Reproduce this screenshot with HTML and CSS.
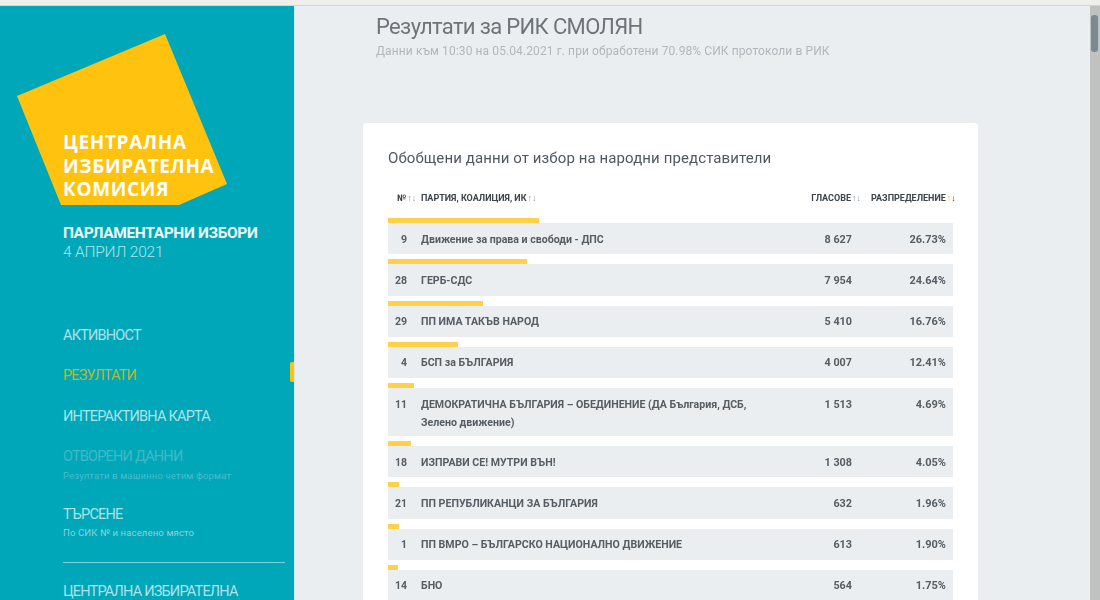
FILE: index.html
```html
<!DOCTYPE html>
<html lang="bg">
<head>
<meta charset="utf-8">
<title>Резултати за РИК СМОЛЯН</title>
<link rel="stylesheet" href="styles.css">
</head>
<body>
<div class="topstrip"></div>
<div class="app">
  <aside class="sidebar">
    <div class="logo">
      <svg class="logo-shape" width="294" height="210" viewBox="0 0 294 210"><polygon points="165,28 227,178 179,199 61,199 17,90" fill="#ffc20e"/></svg>
      <div class="logo-text">ЦЕНТРАЛНА<br>ИЗБИРАТЕЛНА<br>КОМИСИЯ</div>
    </div>
    <div class="election">
      <div class="election-name">ПАРЛАМЕНТАРНИ ИЗБОРИ</div>
      <div class="election-date">4 АПРИЛ 2021</div>
    </div>
    <nav class="nav">
      <a class="nav-item">АКТИВНОСТ</a>
      <a class="nav-item active">РЕЗУЛТАТИ<span class="marker"></span></a>
      <a class="nav-item">ИНТЕРАКТИВНА КАРТА</a>
      <a class="nav-item disabled">ОТВОРЕНИ ДАННИ<small>Резултати в машинно четим формат</small></a>
      <a class="nav-item">ТЪРСЕНЕ<small>По СИК № и населено място</small></a>
      <div class="nav-sep"></div>
      <a class="nav-item">ЦЕНТРАЛНА ИЗБИРАТЕЛНА</a>
    </nav>
  </aside>
  <main class="main">
    <h1 class="title">Резултати за РИК СМОЛЯН</h1>
    <p class="subtitle">Данни към 10:30 на 05.04.2021 г. при обработени 70.98% СИК протоколи в РИК</p>
    <section class="card">
      <h2 class="card-title">Обобщени данни от избор на народни представители</h2>
      <div class="thead">
        <div class="c-num">№<span class="arrows">↑↓</span></div>
        <div class="c-name">ПАРТИЯ, КОАЛИЦИЯ, ИК<span class="arrows">↑↓</span></div>
        <div class="h-votes">ГЛАСОВЕ<span class="arrows">↑↓</span></div>
        <div class="h-pct">РАЗПРЕДЕЛЕНИЕ<span class="arrows"><b>↑</b><i>↓</i></span></div>
      </div>
      <div class="result"><div class="bar" style="width:26.73%"></div><div class="row"><div class="c-num">9</div><div class="c-name">Движение за права и свободи - ДПС</div><div class="c-votes">8 627</div><div class="c-pct">26.73%</div></div></div>
      <div class="result"><div class="bar" style="width:24.64%"></div><div class="row"><div class="c-num">28</div><div class="c-name">ГЕРБ-СДС</div><div class="c-votes">7 954</div><div class="c-pct">24.64%</div></div></div>
      <div class="result"><div class="bar" style="width:16.76%"></div><div class="row"><div class="c-num">29</div><div class="c-name">ПП ИМА ТАКЪВ НАРОД</div><div class="c-votes">5 410</div><div class="c-pct">16.76%</div></div></div>
      <div class="result"><div class="bar" style="width:12.41%"></div><div class="row"><div class="c-num">4</div><div class="c-name">БСП за БЪЛГАРИЯ</div><div class="c-votes">4 007</div><div class="c-pct">12.41%</div></div></div>
      <div class="result"><div class="bar" style="width:4.69%"></div><div class="row"><div class="c-num">11</div><div class="c-name">ДЕМОКРАТИЧНА БЪЛГАРИЯ – ОБЕДИНЕНИЕ (ДА България, ДСБ, Зелено движение)</div><div class="c-votes">1 513</div><div class="c-pct">4.69%</div></div></div>
      <div class="result"><div class="bar" style="width:4.05%"></div><div class="row"><div class="c-num">18</div><div class="c-name">ИЗПРАВИ СЕ! МУТРИ ВЪН!</div><div class="c-votes">1 308</div><div class="c-pct">4.05%</div></div></div>
      <div class="result"><div class="bar" style="width:1.96%"></div><div class="row"><div class="c-num">21</div><div class="c-name">ПП РЕПУБЛИКАНЦИ ЗА БЪЛГАРИЯ</div><div class="c-votes">632</div><div class="c-pct">1.96%</div></div></div>
      <div class="result"><div class="bar" style="width:1.90%"></div><div class="row"><div class="c-num">1</div><div class="c-name">ПП ВМРО – БЪЛГАРСКО НАЦИОНАЛНО ДВИЖЕНИЕ</div><div class="c-votes">613</div><div class="c-pct">1.90%</div></div></div>
      <div class="result"><div class="bar" style="width:1.75%"></div><div class="row"><div class="c-num">14</div><div class="c-name">БНО</div><div class="c-votes">564</div><div class="c-pct">1.75%</div></div></div>
    </section>
  </main>
  <div class="scrollbar"><div class="thumb"></div></div>
</div>
</body>
</html>
```
FILE: styles.css
```css
* { box-sizing: border-box; }
html, body { margin: 0; height: 600px; overflow: hidden; }
body { font-family: Roboto, "Liberation Sans", sans-serif; background: #ebeef1; display: flex; flex-direction: column; }
.topstrip { height: 6px; flex: none; background: #eeeeeb; border-bottom: 1px solid #d2d6d9; }
.app { flex: 1; display: flex; min-height: 0; overflow: hidden; filter: blur(0.75px); }

.sidebar { width: 295px; flex: none; background: #00a7b9; border-right: 1px solid #d5e6ea; color: #fff; position: relative; }
.logo { position: relative; height: 200px; padding: 125px 0 0 63px; }
.logo-shape { position: absolute; left: 0; top: 0; }
.logo-text { position: relative; font-family: "Open Sans", Roboto, sans-serif; font-weight: 700; font-size: 19px; line-height: 23.5px; letter-spacing: 0.65px; color: #fff; }
.election { margin: 18px 0 0 63px; }
.election-name { font-size: 15.5px; line-height: 19px; font-weight: 700; letter-spacing: -0.35px; color: #eef9fa; white-space: nowrap; }
.election-date { font-size: 15.5px; line-height: 19px; font-weight: 300; letter-spacing: -0.2px; color: #b5e3e9; }
.nav { margin-top: 65px; display: flex; flex-direction: column; padding-left: 63px; }
.nav-item { display: block; font-size: 14.5px; line-height: 18px; font-weight: 400; letter-spacing: -0.8px; color: #aee1e8; margin-bottom: 22.4px; white-space: nowrap; }
.nav-item small { display: block; font-size: 9.5px; line-height: 12px; margin-top: 4px; letter-spacing: 0.15px; color: #8ad3dc; }
.nav-item.active { color: #b3b83a; }
.nav-item.disabled { color: #40b9c7; margin-bottom: 24px; }
.nav-item.disabled small { color: #49bcca; }
.nav-item:nth-child(5) { margin-bottom: 0; }
.nav-item:nth-child(5) small { margin-top: 3px; }
.marker { position: absolute; right: 0; width: 4px; height: 20px; margin-top: -5px; background: #ffc20e; border-radius: 2px 0 0 2px; }
.nav-sep { height: 1px; background: #7fd2dc; margin: 23px 9px 20px 0; flex: none; }

.main { flex: 1; min-width: 0; padding-left: 68px; color: #555e66; }
.title { margin: 8px 0 0 13px; font-size: 22px; line-height: 26px; font-weight: 400; letter-spacing: -0.65px; color: #6d747a; }
.subtitle { margin: 3px 0 0 13px; font-size: 12px; line-height: 16px; color: #b0b7bc; letter-spacing: 0.1px; }
.card { width: 615px; height: 560px; margin-top: 64px; padding: 25px 25px 0; background: #fff; border-radius: 4px; }
.card-title { margin: 0; font-size: 15px; line-height: 20px; font-weight: 400; color: #50585f; letter-spacing: 0.1px; }
.thead { display: flex; align-items: center; height: 20px; margin-top: 20px; font-size: 9px; font-weight: 700; color: #3d444a; white-space: nowrap; }
.thead .c-num { width: 33px; padding-left: 9px; flex: none; }
.thead .c-name { flex: 1; }
.arrows { font-weight: 400; color: #8f979d; font-size: 9px; margin-left: 1px; }
.arrows b { color: #ffc20e; font-weight: 700; }
.arrows i { color: #3d444a; font-style: normal; font-weight: 700; }
.h-votes { width: 70px; text-align: right; margin-right: 10px; flex: none; }
.h-pct { width: 87px; margin-right: -5px; flex: none; }
.result { margin-top: 5px; }
.thead + .result { margin-top: 10px; }
.bar { height: 5px; background: #ffd04a; }
.row { display: flex; align-items: flex-start; background: #ebeef1; min-height: 31.25px; padding: 7.5px 0 4.5px; font-size: 10.6px; line-height: 18px; font-weight: 700; color: #555d63; }
.c-num { width: 33px; flex: none; }
.row .c-num { text-align: right; padding-right: 14px; width: 33px; font-size: 10.5px; }
.row .c-name { width: 340px; flex: none; }
.c-votes { width: 91px; flex: none; text-align: right; font-size: 10.8px; }
.c-pct { width: 101px; flex: none; text-align: right; padding-right: 7px; font-size: 11px; }

.scrollbar { width: 10px; flex: none; background: #c0c2c1; padding: 9px 2px 0 1px; }
.thumb { height: 37px; background: #7c8892; border-radius: 3px; }
```
